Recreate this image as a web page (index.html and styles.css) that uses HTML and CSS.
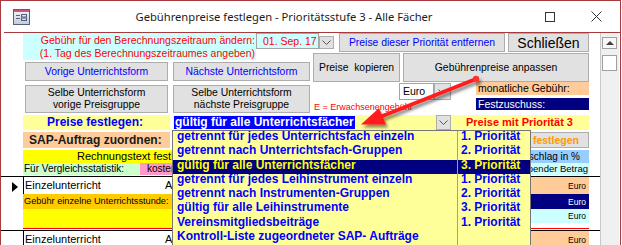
FILE: index.html
```html
<!DOCTYPE html>
<html lang="de">
<head>
<meta charset="utf-8">
<title>Gebührenpreise festlegen</title>
<link rel="stylesheet" href="styles.css">
</head>
<body>
<div class="window">
  <div class="titlebar">
    <svg class="app-icon" width="17" height="16" viewBox="0 0 17 16">
      <defs>
        <linearGradient id="ig" x1="0" y1="0" x2="0" y2="1">
          <stop offset="0" stop-color="#f4f6fb"/>
          <stop offset="1" stop-color="#c3cad9"/>
        </linearGradient>
      </defs>
      <rect x="0.5" y="0.5" width="16" height="15" fill="url(#ig)" stroke="#55607e"/>
      <rect x="1" y="1" width="15" height="2" fill="#c9577d"/>
      <rect x="3" y="6" width="4" height="1" fill="#55607e"/>
      <rect x="3" y="9" width="4" height="1" fill="#55607e"/>
      <rect x="8.5" y="5.5" width="5" height="2.5" fill="none" stroke="#55607e"/>
      <rect x="8.5" y="9" width="5" height="2.5" fill="none" stroke="#55607e"/>
    </svg>
    <div class="title">Gebührenpreise festlegen - Prioritätsstufe 3 - Alle Fächer</div>
    <div class="caption">
      <div class="cap-btn"><svg width="10" height="10" viewBox="0 0 10 10"><rect x="0.5" y="0.5" width="9" height="9" fill="none" stroke="#333"/></svg></div>
      <div class="cap-btn"><svg width="11" height="11" viewBox="0 0 11 11"><path d="M0.5 0.5 L10.5 10.5 M10.5 0.5 L0.5 10.5" stroke="#333" fill="none"/></svg></div>
    </div>
  </div>
  <div class="title-line"></div>

  <div class="client">
    <div class="main">
      <div class="top">
        <div class="top-left">
          <div class="r1">
            <div class="hint">Gebühr für den Berechnungszeitraum ändern:<br>(1. Tag des Berechnungszeitraumes angeben)</div>
            <div class="date">
              <div class="date-field">01. Sep. 17</div>
              <div class="ddb"><svg width="9" height="5" viewBox="0 0 9 5"><path d="M0.5 0.5 L4.5 4.5 L8.5 0.5" fill="none" stroke="#555"/></svg></div>
            </div>
          </div>
          <div class="r2">
            <div class="btn blue w143">Vorige Unterrichtsform</div>
            <div class="btn blue w137">Nächste Unterrichtsform</div>
          </div>
          <div class="r3">
            <div class="btn w143">Selbe Unterrichsform<br>vorige Preisgruppe</div>
            <div class="btn w137">Selbe Unterrichtsform<br>nächste Preisgruppe</div>
          </div>
        </div>
        <div class="top-right">
          <div class="rr1">
            <div class="btn blue w166">Preise dieser Priorität entfernen</div>
            <div class="btn close-btn">Schließen</div>
          </div>
          <div class="rr2">
            <div class="btn w87 pre">Preise  kopieren</div>
            <div class="btn w186">Gebührenpreise anpassen</div>
          </div>
          <div class="rr3">
            <div class="euro-group">
              <div class="euro-combo">
                <div class="euro-field">Euro</div>
                <div class="ddb"><svg width="9" height="5" viewBox="0 0 9 5"><path d="M0.5 0.5 L4.5 4.5 L8.5 0.5" fill="none" stroke="#555"/></svg></div>
              </div>
              <div class="e-note">E = Erwachsenengebühr</div>
            </div>
            <div class="fee-group">
              <div class="monthly">monatliche Gebühr:</div>
              <div class="fixed">Festzuschuss:</div>
            </div>
          </div>
        </div>
      </div>

      <div class="mid">
        <div class="row row-pf">
          <div class="pf-label">Preise festlegen:</div>
          <div class="pf-combo">
            <div class="pf-sel">gültig für alle Unterrichtsfächer</div>
            <div class="ddb"><svg width="9" height="5" viewBox="0 0 9 5"><path d="M0.5 0.5 L4.5 4.5 L8.5 0.5" fill="none" stroke="#555"/></svg></div>
          </div>
          <div class="pf-prio">Preise mit Priorität 3</div>
        </div>
        <div class="row row-sap">
          <div class="sap-label">SAP-Auftrag zuordnen:</div>
          <div class="btn set-btn"><span>Texte festlegen</span></div>
        </div>
        <div class="row row-rt">
          <div class="rt-label">Rechnungstext festlegen</div>
          <div class="surcharge"><span>Aufschlag in %</span></div>
        </div>
        <div class="row row-vs">
          <div class="vs-label">Für Vergleichsstatistik:</div>
          <div class="cost">kostenlos</div>
          <div class="rest"><span>verbleibender Betrag</span></div>
        </div>
      </div>

      <div class="detail">
        <div class="record">
          <div class="selector"><div class="tri"></div></div>
          <div class="rec-grid">
            <div class="f-name">Einzelunterricht</div>
            <div class="f-a">A</div>
            <div class="euro eu-peach">Euro</div>
            <div class="f-fee">Gebühr einzelne Unterrichtsstunde:</div>
            <div class="euro eu-navy">Euro</div>
            <div class="f-yellow"></div>
            <div class="euro eu-cyan">Euro</div>
            <div class="red-line"></div>
          </div>
        </div>
        <div class="record">
          <div class="selector"></div>
          <div class="rec-grid">
            <div class="f-name">Einzelunterricht</div>
            <div class="f-a">A</div>
            <div class="euro eu-peach">Euro</div>
          </div>
        </div>
      </div>
    </div>
    <div class="scrollbar">
      <div class="sb-up"><span class="sb-tri"></span></div>
      <div class="sb-thumb"></div>
    </div>
  </div>

  <div class="dropdown">
    <div class="dd-l">getrennt für jedes Unterrichtsfach einzeln</div><div class="dd-r">1. Priorität</div>
    <div class="dd-l">getrennt nach Unterrichtsfach-Gruppen</div><div class="dd-r">2. Priorität</div>
    <div class="dd-l dd-sel">gültig für alle Unterrichtsfächer</div><div class="dd-r dd-sel">3. Priorität</div>
    <div class="dd-l">getrennt für jedes Leihinstrument einzeln</div><div class="dd-r">1. Priorität</div>
    <div class="dd-l">getrennt nach Instrumenten-Gruppen</div><div class="dd-r">2. Priorität</div>
    <div class="dd-l">gültig für alle Leihinstrumente</div><div class="dd-r">3. Priorität</div>
    <div class="dd-l">Vereinsmitgliedsbeiträge</div><div class="dd-r">1. Priorität</div>
    <div class="dd-l">Kontroll-Liste zugeordneter SAP- Aufträge</div><div class="dd-r"></div>
  </div>

  <svg class="arrow" width="622" height="245" viewBox="0 0 622 245">
    <defs>
      <filter id="sh" x="-20%" y="-60%" width="140%" height="220%">
        <feDropShadow dx="2" dy="3" stdDeviation="1.6" flood-color="#000" flood-opacity="0.45"/>
      </filter>
    </defs>
    <g filter="url(#sh)">
      <line x1="476" y1="79" x2="380" y2="117" stroke="#ff1c1c" stroke-width="4" stroke-linecap="round"/>
      <circle cx="476" cy="79" r="3.2" fill="#ff3030"/>
      <polygon points="361,124.5 386,124.5 379,108" fill="#ff1c1c"/>
    </g>
  </svg>
</div>
</body>
</html>
```

FILE: styles.css
```css
* { box-sizing: border-box; margin: 0; padding: 0; }
html, body { width: 622px; height: 245px; overflow: hidden; background: #fff; }
body { font-family: "Liberation Sans", Arial, sans-serif; color: #000; }

.window {
  position: relative;
  width: 621px;
  height: 262px;
  border: 1px solid #a63a3d;
  overflow: hidden;
  background: #fff;
}

/* title bar */
.titlebar { height: 31px; display: flex; align-items: center; }
.app-icon { flex: none; margin-left: 12px; }
.title {
  flex: 1;
  text-align: center;
  padding-left: 11px;
  font-family: "Noto Sans", sans-serif;
  font-size: 11.2px;
  color: #1b1b1b;
  white-space: nowrap;
}
.caption { display: flex; height: 100%; padding-right: 1px; }
.cap-btn { width: 46px; display: flex; align-items: center; justify-content: center; }
.title-line { height: 1px; margin-left: 3px; background: #a63a3d; }

.client { display: flex; height: 230px; }
.main { width: 599px; flex: none; position: relative; }

/* generic controls */
.btn {
  flex: none;
  background: #e1e1e1;
  border: 1px solid #adadad;
  display: flex;
  align-items: center;
  justify-content: center;
  text-align: center;
  font-size: 10.4px;
  line-height: 12px;
  white-space: nowrap;
}
.blue { color: #0000ff; }
.pre { white-space: pre; }
.w143 { width: 143px; }
.w137 { width: 137px; }
.w166 { width: 166px; }
.w87 { width: 87px; }
.w186 { width: 186px; }
.close-btn { width: 81px; font-size: 14px; }

.ddb {
  flex: none;
  width: 15px;
  background: #e1e1e1;
  border: 1px solid #adadad;
  display: flex;
  align-items: center;
  justify-content: center;
}

/* top block */
.top { display: flex; height: 80px; }
.top-left { flex: none; width: 287px; margin-left: 22px; display: flex; flex-direction: column; }
.r1 { display: flex; height: 27px; }
.hint {
  flex: none;
  width: 233px;
  background: #ccffff;
  color: #f00;
  font-size: 10.5px;
  line-height: 12.5px;
  text-align: right;
  padding: 1px 1px 0 0;
  white-space: nowrap;
}
.date { flex: none; display: flex; height: 16px; }
.date-field {
  width: 63px;
  background: #ccffff;
  border: 1px solid #a5a5a5;
  color: #f00;
  font-size: 10.5px;
  line-height: 14px;
  padding-left: 6px;
  white-space: nowrap;
}
.date .ddb { height: 13px; align-self: flex-end; }

.r2, .r3 { display: flex; gap: 5px; padding-left: 2px; }
.r2 { margin-top: 2px; height: 19px; }
.r3 { margin-top: 4px; height: 28px; }

.top-right { flex: none; width: 276px; margin-left: 3px; display: flex; flex-direction: column; }
.rr1 { display: flex; gap: 3px; height: 19px; padding-left: 26px; }
.rr2 { display: flex; gap: 3px; height: 29px; margin-top: 1px; }
.rr3 { display: flex; height: 31px; }

.euro-group { flex: none; width: 138px; }
.euro-combo { display: flex; margin: 1px 0 0 86px; height: 17px; }
.euro-field {
  width: 35px;
  border: 1px solid #a5a5a5;
  background: #fff;
  font-size: 10.5px;
  line-height: 15px;
  padding-left: 3px;
}
.euro-combo .ddb { width: 17px; }
.e-note {
  font-size: 9px;
  line-height: 10px;
  color: #f00;
  margin-top: 2px;
  padding-left: 1px;
  white-space: nowrap;
}
.fee-group { flex: none; width: 113px; margin-left: 25px; }
.monthly {
  height: 13px;
  background: #ffcc99;
  font-size: 10.5px;
  line-height: 13px;
  padding-left: 2px;
  white-space: nowrap;
}
.fixed {
  height: 12px;
  margin-top: 3px;
  background: #000080;
  color: #fff;
  font-size: 10.5px;
  line-height: 12px;
  padding-left: 2px;
}

/* middle rows */
.mid { padding-left: 22px; }
.row { display: flex; white-space: nowrap; }
.row > * { flex: none; }
.row-pf { margin-top: 2px; height: 15px; }
.pf-label {
  width: 147px;
  background: #ffff99;
  color: #0000ff;
  font-weight: bold;
  font-size: 12px;
  line-height: 15px;
  padding-left: 24px;
}
.pf-combo {
  width: 278px;
  margin-left: 3px;
  background: #ffff99;
  display: flex;
  justify-content: space-between;
}
.pf-sel {
  margin: 1px 0 0 1px;
  height: 13px;
  background: #0000ff;
  color: #fff;
  font-weight: bold;
  font-size: 12px;
  line-height: 13px;
  padding: 0 1px;
}
.pf-combo .ddb { height: 15px; }
.pf-prio {
  width: 138px;
  background: #ffff99;
  color: #f00;
  font-weight: bold;
  font-size: 11px;
  line-height: 15px;
  padding-left: 15px;
}

.row-sap { margin-top: 2px; height: 16px; }
.sap-label {
  width: 147px;
  background: #ffcc99;
  color: #1a1a1a;
  font-weight: bold;
  font-size: 12px;
  line-height: 16px;
  padding-left: 6px;
}
/* controls partly hidden behind the open list: only their right part shows */
.set-btn {
  margin-left: 360px;
  width: 59px;
  overflow: hidden;
  justify-content: flex-end;
  padding-right: 9px;
  color: #ff9900;
  font-weight: bold;
  font-size: 10.5px;
}
.set-btn span, .surcharge span, .rest span { flex: none; }

.row-rt { margin-top: 2px; height: 13px; }
.rt-label {
  width: 149px;
  overflow: hidden;
  background: #ffff00;
  font-size: 11px;
  line-height: 13px;
  padding-left: 54px;
}
.surcharge {
  margin-left: 359px;
  width: 58px;
  overflow: hidden;
  display: flex;
  justify-content: flex-end;
  background: #99ccff;
  font-size: 10px;
  line-height: 13px;
  padding-right: 9px;
}

.row-vs { height: 12px; }
.vs-label {
  width: 117px;
  background: #ccffcc;
  font-size: 10px;
  line-height: 12px;
  padding-left: 1px;
}
.cost {
  width: 32px;
  overflow: hidden;
  background: #ff99cc;
  font-size: 10px;
  line-height: 12px;
  padding-left: 7px;
}
.rest {
  margin-left: 359px;
  width: 58px;
  overflow: hidden;
  display: flex;
  justify-content: flex-end;
  background: #ccffff;
  font-size: 9.5px;
  line-height: 12px;
  padding-right: 1px;
}

/* detail records */
.detail { margin-top: 1px; border-top: 1px solid #000; }
.record { display: flex; border-bottom: 1px solid #000; }
.selector { width: 22px; flex: none; padding: 5px 0 0 11px; }
.tri {
  width: 0;
  height: 0;
  border-left: 6px solid #000;
  border-top: 5px solid transparent;
  border-bottom: 5px solid transparent;
}
.rec-grid {
  display: grid;
  grid-template-columns: 140px 137px 231px 58px;
  grid-template-rows: 17px 15px 14px 5px 1px 1px;
}
.f-name {
  grid-column: 1;
  grid-row: 1;
  border-left: 1px solid #000;
  font-size: 11px;
  line-height: 17px;
  padding-left: 1px;
  white-space: nowrap;
}
.f-a { grid-column: 2; grid-row: 1; font-size: 11px; line-height: 17px; padding-left: 2px; }
.f-fee {
  grid-column: 1 / 3;
  grid-row: 2;
  background: #ffcc00;
  font-size: 9.2px;
  line-height: 15px;
  padding-left: 1px;
  white-space: nowrap;
}
.f-yellow { grid-column: 1 / 3; grid-row: 3 / 5; background: #ffff00; }
.red-line { grid-column: 1 / 5; grid-row: 5; background: #f00; }
.euro {
  grid-column: 4;
  font-size: 8.5px;
  display: flex;
  align-items: center;
  justify-content: flex-end;
  padding-right: 3px;
}
.eu-peach { grid-row: 1; background: #ffcc99; }
.eu-navy { grid-row: 2; background: #000080; color: #fff; }
.eu-cyan { grid-row: 3; background: #ccffff; }

/* scrollbar */
.scrollbar {
  width: 19px;
  flex: none;
  background: #f0f0f0;
  border-left: 1px solid #c8c8c8;
  padding-left: 1px;
}
.sb-up {
  width: 15px;
  height: 12px;
  margin-top: 4px;
  border: 1px solid #a0a0a0;
  background: #f7f7f7;
  display: flex;
  align-items: center;
  justify-content: center;
}
.sb-tri {
  width: 0;
  height: 0;
  border-bottom: 4px solid #404040;
  border-left: 4px solid transparent;
  border-right: 4px solid transparent;
}
.sb-thumb {
  width: 15px;
  height: 16px;
  margin-top: 6px;
  border: 1px solid #a0a0a0;
  background: #fff;
}

/* open dropdown list */
.dropdown {
  position: absolute;
  left: 171px;
  top: 129px;
  width: 359px;
  border: 1px solid #767676;
  background: #ffff99;
  display: grid;
  grid-template-columns: 285px 72px;
  grid-auto-rows: 14.25px;
  font-weight: bold;
  font-size: 12px;
  line-height: 10px;
  color: #0000ff;
  white-space: nowrap;
}
.dd-l { border-right: 1px solid #a0a0a0; padding-left: 4px; }
.dd-r { padding-left: 3px; }
.dd-sel { background: #000080; color: #ffff00; }

.arrow { position: absolute; left: -1px; top: -1px; pointer-events: none; }
```
